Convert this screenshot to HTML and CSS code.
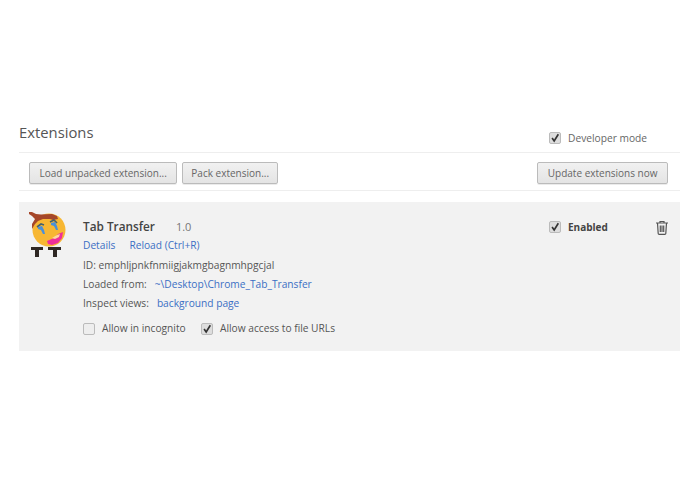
FILE: index.html
```html
<!DOCTYPE html>
<html lang="en">
<head>
    <meta charset="UTF-8">
    <title>Extensions</title>
    <link rel="stylesheet" href="styles.css">
</head>
<body>
    <div class="page">
        <div class="header">
            <h1>Extensions</h1>
            <label class="dev-mode"><span class="check checked"><svg viewBox="0 0 12 12"><path d="M2.5 6 5 9.5 10 1.5" /></svg></span>Developer mode</label>
        </div>
        <div class="toolbar">
            <div class="toolbar-left">
                <button class="btn">Load unpacked extension...</button>
                <button class="btn btn-pack">Pack extension...</button>
            </div>
            <button class="btn">Update extensions now</button>
        </div>
        <div class="card">
            <svg class="ext-icon" viewBox="0 0 38 46">
                <circle fill="#f7b733" cx="20" cy="19" r="16.5" />
                <path fill="#a5472a" d="M0 1h3l4 2 5 .5 11-.5 5 2 1 3-5 1-3-1-7 0-5 2-3 3-3 5H3v-5l3-5-3-3-3-2z" />
                <path fill="none" stroke="#44606e" stroke-width="1.6" d="M8 16l4-3 3 1M21 11l4-2 3 3" />
                <path fill="#4a90d9" d="M9 16l4-1 2 4 1 4h-2l-2-4-3-1zM22 12l4-1 2 4 1 4h-2l-2-4-3-1z" />
                <path fill="#ef2f9b" d="M18 30l7-3 4-4 5-2-1 6-4 5-6 2-4-1z" />
                <path fill="#fdd7a0" d="M23 27l5-3 3-1-1 3-4 2z" />
                <path fill="#2f2824" d="M2 36h12v3H10v7H6v-7H2zM19 36h13v3h-4v7h-4v-7h-5z" />
            </svg>
            <div class="ext-body">
                <div class="ext-title"><span class="ext-name">Tab Transfer</span><span class="ext-version">1.0</span></div>
                <div class="ext-row ext-links"><a>Details</a><a>Reload (Ctrl+R)</a></div>
                <div class="ext-row">ID: emphljpnkfnmiigjakmgbagnmhpgcjal</div>
                <div class="ext-row"><span class="row-label">Loaded from:</span><a>~\Desktop\Chrome_Tab_Transfer</a></div>
                <div class="ext-row"><span class="row-label">Inspect views:</span><a>background page</a></div>
                <div class="ext-options">
                    <label class="opt opt-incognito"><span class="check"></span>Allow in incognito</label>
                    <label class="opt"><span class="check checked"><svg viewBox="0 0 12 12"><path d="M2.5 6 5 9.5 10 1.5" /></svg></span>Allow access to file URLs</label>
                </div>
            </div>
            <div class="ext-side">
                <label class="enabled"><span class="check checked"><svg viewBox="0 0 12 12"><path d="M2.5 6 5 9.5 10 1.5" /></svg></span>Enabled</label>
                <svg class="trash" viewBox="0 0 14 15"><path d="M1 3h12M5 3V1.5h4V3M2.5 3l.7 10.5q0 .8 1 .8h5.6q1 0 1-.8l.7-10.5M5.3 5.5v6.5M7 5.5v6.5M8.7 5.5v6.5" /></svg>
            </div>
        </div>
    </div>
</body>
</html>
```

FILE: styles.css
```css
body {
    margin: 0;
    background: #fff;
    font-family: "Open Sans", "Noto Sans", sans-serif;
    font-size: 10.2px;
    color: #555;
}
.page {
    padding: 120px 15px 0 19px;
}
.header {
    display: flex;
    justify-content: space-between;
    align-items: flex-end;
    height: 32px;
    border-bottom: 1px solid #eee;
}
.header h1 {
    margin: 0 0 8px;
    font-size: 14.8px;
    font-weight: 400;
    line-height: 24px;
    color: #555;
}
.dev-mode {
    display: flex;
    align-items: center;
    gap: 7px;
    margin: 0 33px 6px 0;
    line-height: 16px;
    color: #666;
}
.check {
    display: block;
    box-sizing: border-box;
    width: 12px;
    height: 12px;
    border: 1px solid #bbb;
    border-radius: 2px;
    background: #eee;
}
.check.checked {
    background: #ddd;
}
.check svg {
    display: block;
    width: 10px;
    height: 10px;
}
.check path {
    fill: none;
    stroke: #333;
    stroke-width: 2;
}
.toolbar {
    display: flex;
    justify-content: space-between;
    align-items: center;
    height: 38px;
    padding: 3px 12px 0 10px;
    box-sizing: border-box;
    border-bottom: 1px solid #eee;
}
.toolbar-left {
    display: flex;
    gap: 5px;
}
.btn {
    height: 22px;
    padding: 0 9.5px;
    border: 1px solid #bbb;
    border-radius: 2px;
    background: linear-gradient(#f1f1f1, #e4e4e4);
    box-shadow: 0 1px 0 rgba(0, 0, 0, 0.08);
    font-family: inherit;
    font-size: 10px;
    color: #666;
}
.btn-pack {
    padding: 0 8px;
}
.card {
    display: flex;
    margin-top: 11px;
    height: 149px;
    background: #f2f2f2;
}
.ext-icon {
    width: 38px;
    height: 46px;
    margin: 9px 0 0 10px;
    filter: blur(0.4px);
}
.ext-body {
    flex: 1;
    margin-left: 16px;
    padding-top: 16px;
}
.ext-title {
    display: flex;
    align-items: baseline;
    height: 18px;
}
.ext-name {
    font-size: 11.8px;
    font-weight: 600;
    color: #444;
}
.ext-version {
    margin-left: 21px;
    font-size: 11px;
    color: #777;
}
.ext-row {
    height: 19px;
    line-height: 19px;
    color: #555;
}
.ext-links {
    display: flex;
    gap: 14px;
    height: 20px;
}
a {
    color: #3b6fc4;
}
.row-label {
    margin-right: 8px;
}
.ext-options {
    display: flex;
    margin-top: 6px;
}
.opt {
    display: flex;
    align-items: center;
    gap: 7px;
    line-height: 19px;
}
.opt-incognito {
    width: 118px;
}
.ext-side {
    display: flex;
    align-items: flex-start;
    padding: 18px 11px 0 0;
}
.enabled {
    display: flex;
    align-items: center;
    gap: 7px;
    width: 106px;
    line-height: 14px;
    font-size: 10px;
    font-weight: 700;
    color: #444;
}
.trash {
    width: 14px;
    height: 15px;
    fill: none;
    stroke: #555;
    stroke-width: 1.2;
}
```
